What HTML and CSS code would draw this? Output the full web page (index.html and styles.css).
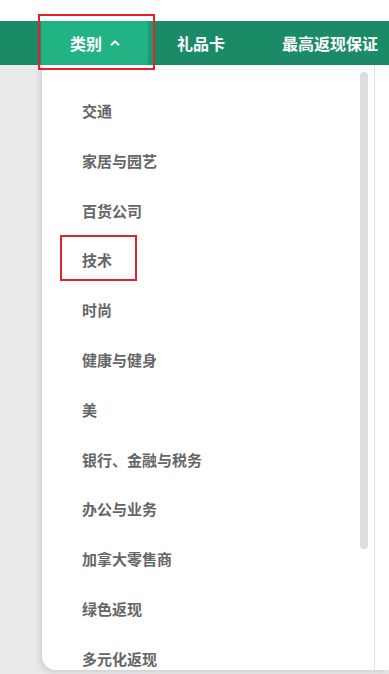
FILE: index.html
```html
<!DOCTYPE html>
<html lang="zh-CN">

<head>
  <meta charset="UTF-8">
  <meta name="viewport" content="width=device-width, initial-scale=1.0">
  <title>类别</title>
  <link rel="stylesheet" href="styles.css">
</head>

<body>
  <div class="top"></div>
  <ul class="nav">
    <li class="active">类别
      <svg class="caret" width="12" height="8" viewBox="0 0 12 8"><path d="M1.2 6.8 L6 2 L10.8 6.8" fill="none" stroke="#fff" stroke-width="2.4"/></svg>
    </li>
    <li>礼品卡</li>
    <li>最高返现保证</li>
  </ul>
  <div class="main">
    <div class="side"></div>
    <div class="menu">
      <div class="list">
        <ul class="cats">
          <li>交通</li>
          <li>家居与园艺</li>
          <li>百货公司</li>
          <li>技术</li>
          <li>时尚</li>
          <li>健康与健身</li>
          <li>美</li>
          <li>银行、金融与税务</li>
          <li>办公与业务</li>
          <li>加拿大零售商</li>
          <li>绿色返现</li>
          <li>多元化返现</li>
        </ul>
        <div class="thumb"></div>
      </div>
      <div class="extra"></div>
    </div>
  </div>
  <div class="mark mark-nav"></div>
  <div class="mark mark-item"></div>
</body>

</html>
```

FILE: styles.css
```css
html,
body {
  margin: 0;
  padding: 0;
  height: 674px;
  overflow: hidden;
  background: #e9eaec;
  font-family: "Noto Sans CJK SC", "Noto Sans", sans-serif;
}

body {
  position: relative;
}

ul {
  list-style: none;
  margin: 0;
  padding: 0;
}

.top {
  height: 21px;
  background: #ffffff;
}

.nav {
  display: flex;
  height: 44px;
  padding-left: 41px;
  background: #1b8a67;
  white-space: nowrap;
}

.nav li {
  display: flex;
  align-items: center;
  padding: 0 28px 0 29px;
  color: #ffffff;
  font-size: 16px;
  font-weight: bold;
}

.nav li.active {
  width: 107px;
  box-sizing: border-box;
  background: #21b384;
  box-shadow: 5px 0 0 #1d9a72;
}

.nav .caret {
  margin-left: 8px;
  margin-top: -1px;
}

.main {
  display: flex;
  height: 605px;
}

.side {
  width: 42px;
  flex: none;
}

.menu {
  flex: 1;
  display: flex;
  background: #ffffff;
  border-bottom-left-radius: 14px;
  box-shadow: -2px 2px 6px rgba(0, 0, 0, 0.12);
  overflow: hidden;
}

.list {
  position: relative;
  width: 332px;
  border-right: 1px solid #e2e2e4;
  overflow: hidden;
}

.cats {
  padding: 21px 0 0 40px;
}

.cats li {
  height: 49.8px;
  line-height: 49.8px;
  color: #666666;
  font-size: 15px;
  font-weight: bold;
}

.thumb {
  position: absolute;
  left: 318px;
  top: 7px;
  width: 8px;
  height: 477px;
  background: #dcdde1;
  border-radius: 4px;
}

.extra {
  flex: 1;
}

.mark {
  position: absolute;
  border: 2px solid #e4222b;
  box-sizing: border-box;
}

.mark-nav {
  left: 38px;
  top: 14px;
  width: 117px;
  height: 56px;
}

.mark-item {
  left: 60px;
  top: 235px;
  width: 77px;
  height: 46px;
}
```
